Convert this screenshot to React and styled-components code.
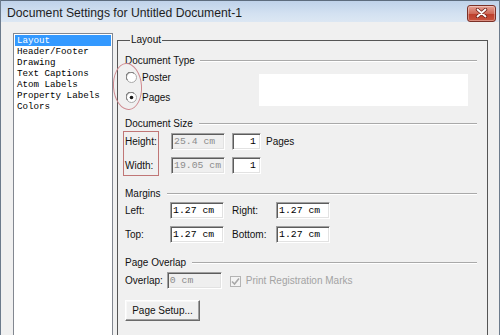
import React from "react";
import styled, { createGlobalStyle } from "styled-components";

const Global = createGlobalStyle`
  html, body { margin: 0; padding: 0; background: #f0f0f0; }
  * { box-sizing: border-box; }
`;

const Window = styled.div`
  width: 500px;
  height: 335px;
  overflow: hidden;
  display: flex;
  flex-direction: column;
  background: #f0f0f0;
  border-left: 1px solid #6c7b8c;
  border-right: 1px solid #6c7b8c;
  font-family: "Liberation Sans", Arial, sans-serif;
  font-size: 10px;
  color: #111;
`;

const TitleBar = styled.div`
  height: 22px;
  flex: none;
  display: flex;
  align-items: center;
  padding: 1px 3px 0 6px;
  border-top: 1px solid #5d6c7e;
  background: linear-gradient(#bfd2ea, #d3e1f1 60%, #dce7f3);
`;

const Title = styled.div`
  flex: 1;
  font-size: 12.2px;
  color: #1e1e1e;
  padding-top: 1px;
`;

const CloseButton = styled.div`
  width: 29px;
  height: 17px;
  margin-top: 2px;
  border: 1px solid #7b3128;
  border-radius: 3px;
  background: linear-gradient(#e6a195, #cf6a58 50%, #bc3d2a 51%, #c9543f);
  display: flex;
  align-items: center;
  justify-content: center;
  box-shadow: inset 0 0 0 1px rgba(255, 255, 255, 0.35);
`;

const Body = styled.div`
  flex: 1;
  display: flex;
  align-items: flex-start;
  padding: 11px 0 0 12px;
`;

const List = styled.div`
  width: 100px;
  height: 330px;
  flex: none;
  background: #fff;
  border: 1px solid #828790;
  padding: 1px;
  font-family: "Liberation Mono", "Courier New", monospace;
  font-size: 9.2px;
`;

const ListItem = styled.div`
  height: 11px;
  line-height: 11px;
  padding-left: 2px;
  white-space: nowrap;
  color: ${(p) => (p.$selected ? "#fff" : "#000")};
  background: ${(p) => (p.$selected ? "#3399ff" : "transparent")};
`;

const Group = styled.fieldset`
  margin: 0 0 0 4px;
  width: 371px;
  height: 330px;
  flex: none;
  border: 1px solid #555;
  padding: 0 10px 0 7px;
`;

const Legend = styled.legend`
  margin-left: 5px;
  padding: 0 1px;
  line-height: 14px;
  font-size: 10px;
`;

const SectionHeader = styled.div`
  display: flex;
  align-items: center;
  height: 13px;
  margin-top: ${(p) => p.$mt}px;
  gap: ${(p) => p.$gap ?? 6}px;
  white-space: nowrap;
  &::after {
    content: "";
    flex: 1;
    border-top: 1px solid #a9a9a9;
    border-bottom: 1px solid #fff;
  }
`;

const TypeRow = styled.div`
  position: relative;
  display: flex;
  align-items: flex-start;
`;

const Annotation = styled.div`
  position: absolute;
  left: -12px;
  top: -4px;
  width: 29px;
  height: 47px;
  border: 1px solid #cf8a90;
  border-radius: 50%;
  transform: rotate(-4deg);
  pointer-events: none;
`;

const RadioColumn = styled.div`
  display: flex;
  flex-direction: column;
`;

const RadioRow = styled.div`
  height: 20px;
  display: flex;
  align-items: center;
  gap: 5px;
  padding-left: 1px;
`;

const Preview = styled.div`
  margin: 7px 9px 0 auto;
  width: 209px;
  height: 32px;
  background: #fff;
`;

const SizeBlock = styled.div`
  display: flex;
  margin-top: 1px;
`;

const LabelBox = styled.div`
  margin-left: -2px;
  width: 36px;
  border: 1px solid #c07676;
  padding: 1px 0 1px 1px;
  display: flex;
  flex-direction: column;
  gap: 7px;
`;

const RowLabel = styled.div`
  height: 17px;
  line-height: 17px;
  white-space: nowrap;
`;

const SizeFields = styled.div`
  margin-left: 12px;
  padding-top: 2px;
  display: flex;
  flex-direction: column;
  gap: 7px;
`;

const FieldRow = styled.div`
  display: flex;
  align-items: center;
  height: 17px;
`;

const Input = styled.div`
  width: ${(p) => p.$w}px;
  height: 17px;
  margin-left: ${(p) => p.$ml ?? 0}px;
  border: 1px solid;
  border-color: #a0a0a0 #fff #fff #a0a0a0;
  box-shadow: inset 1px 1px 0 #5c5c5c, inset -1px -1px 0 #e2e2e2;
  background: ${(p) => (p.$disabled ? "#efefef" : "#fff")};
  color: ${(p) => (p.$disabled ? "#8c8c8c" : "#000")};
  font-family: "Liberation Mono", "Courier New", monospace;
  font-size: 9.8px;
  line-height: 15px;
  padding: 0 ${(p) => (p.$right ? 4 : 2)}px 0 2px;
  text-align: ${(p) => (p.$right ? "right" : "left")};
  white-space: nowrap;
  overflow: hidden;
`;

const InlineText = styled.span`
  margin-left: ${(p) => p.$ml ?? 0}px;
  color: ${(p) => (p.$disabled ? "#a3a3a3" : "inherit")};
  white-space: nowrap;
`;

const MarginGrid = styled.div`
  display: grid;
  grid-template-columns: 45px 54px 52px 54px;
  grid-auto-rows: 17px;
  row-gap: 7px;
  align-items: center;
  margin-top: 2px;
`;

const GridLabel = styled.div`
  padding-left: ${(p) => p.$pl ?? 0}px;
  white-space: nowrap;
`;

const OverlapRow = styled.div`
  display: flex;
  align-items: center;
  height: 17px;
  margin-top: 3px;
`;

const Check = styled.div`
  width: 11px;
  height: 11px;
  margin-left: 8px;
  margin-top: 2px;
  border: 1px solid #b4b4b4;
  background: #f4f4f4;
  display: flex;
  align-items: center;
  justify-content: center;
`;

const Button = styled.div`
  margin-top: 11px;
  width: 75px;
  height: 21px;
  border: 1px solid;
  border-color: #fff #6a6a6a #6a6a6a #fff;
  box-shadow: inset -1px -1px 0 #a0a0a0, inset 1px 1px 0 #f8f8f8;
  display: flex;
  align-items: center;
  justify-content: center;
  padding-bottom: 1px;
  white-space: nowrap;
`;

const Radio = ({ checked }) => (
  <svg width="11" height="11" viewBox="0 0 11 11">
    <circle cx="5.5" cy="5.5" r="5" fill="#fff" stroke="#a8a8a8" />
    <path d="M1.4 8 A4.6 4.6 0 0 1 8 1.4" fill="none" stroke="#6a6a6a" strokeWidth="1" />
    {checked && <circle cx="5.5" cy="5.5" r="1.8" fill="#1a1a1a" />}
  </svg>
);

const items = [
  "Layout",
  "Header/Footer",
  "Drawing",
  "Text Captions",
  "Atom Labels",
  "Property Labels",
  "Colors",
];

export default function App() {
  return (
    <>
      <Global />
      <Window>
        <TitleBar>
          <Title>Document Settings for Untitled Document-1</Title>
          <CloseButton>
            <svg width="13" height="10" viewBox="0 0 13 10">
              <path d="M2.5 1.5 L10.5 8.5 M10.5 1.5 L2.5 8.5" stroke="#6e2018" strokeWidth="3.4" strokeLinecap="round" />
              <path d="M2.5 1.5 L10.5 8.5 M10.5 1.5 L2.5 8.5" stroke="#fff" strokeWidth="1.8" strokeLinecap="round" />
            </svg>
          </CloseButton>
        </TitleBar>
        <Body>
          <List>
            {items.map((t, i) => (
              <ListItem key={t} $selected={i === 0}>
                {t}
              </ListItem>
            ))}
          </List>
          <Group>
            <Legend>Layout</Legend>
            <SectionHeader $mt={7} $gap={5}>Document Type</SectionHeader>
            <TypeRow>
              <Annotation />
              <RadioColumn>
                <RadioRow>
                  <Radio />
                  <span>Poster</span>
                </RadioRow>
                <RadioRow>
                  <Radio checked />
                  <span>Pages</span>
                </RadioRow>
              </RadioColumn>
              <Preview />
            </TypeRow>

            <SectionHeader $mt={10}>Document Size</SectionHeader>
            <SizeBlock>
              <LabelBox>
                <RowLabel>Height:</RowLabel>
                <RowLabel>Width:</RowLabel>
              </LabelBox>
              <SizeFields>
                <FieldRow>
                  <Input $w={54} $disabled>25.4 cm</Input>
                  <Input $w={29} $ml={7} $right>1</Input>
                  <InlineText $ml={5}>Pages</InlineText>
                </FieldRow>
                <FieldRow>
                  <Input $w={54} $disabled>19.05 cm</Input>
                  <Input $w={29} $ml={7} $right>1</Input>
                </FieldRow>
              </SizeFields>
            </SizeBlock>

            <SectionHeader $mt={11}>Margins</SectionHeader>
            <MarginGrid>
              <GridLabel>Left:</GridLabel>
              <Input $w={54}>1.27 cm</Input>
              <GridLabel $pl={8}>Right:</GridLabel>
              <Input $w={54}>1.27 cm</Input>
              <GridLabel>Top:</GridLabel>
              <Input $w={54}>1.27 cm</Input>
              <GridLabel $pl={8}>Bottom:</GridLabel>
              <Input $w={54}>1.27 cm</Input>
            </MarginGrid>

            <SectionHeader $mt={13}>Page Overlap</SectionHeader>
            <OverlapRow>
              <InlineText>Overlap:</InlineText>
              <Input $w={55} $ml={4} $disabled>0 cm</Input>
              <Check>
                <svg width="9" height="9" viewBox="0 0 9 9">
                  <path d="M1 4.5 L3.5 7 L8 1.5" fill="none" stroke="#a8a8a8" strokeWidth="1.6" />
                </svg>
              </Check>
              <InlineText $ml={5} $disabled>Print Registration Marks</InlineText>
            </OverlapRow>
            <Button>Page Setup...</Button>
          </Group>
        </Body>
      </Window>
    </>
  );
}
